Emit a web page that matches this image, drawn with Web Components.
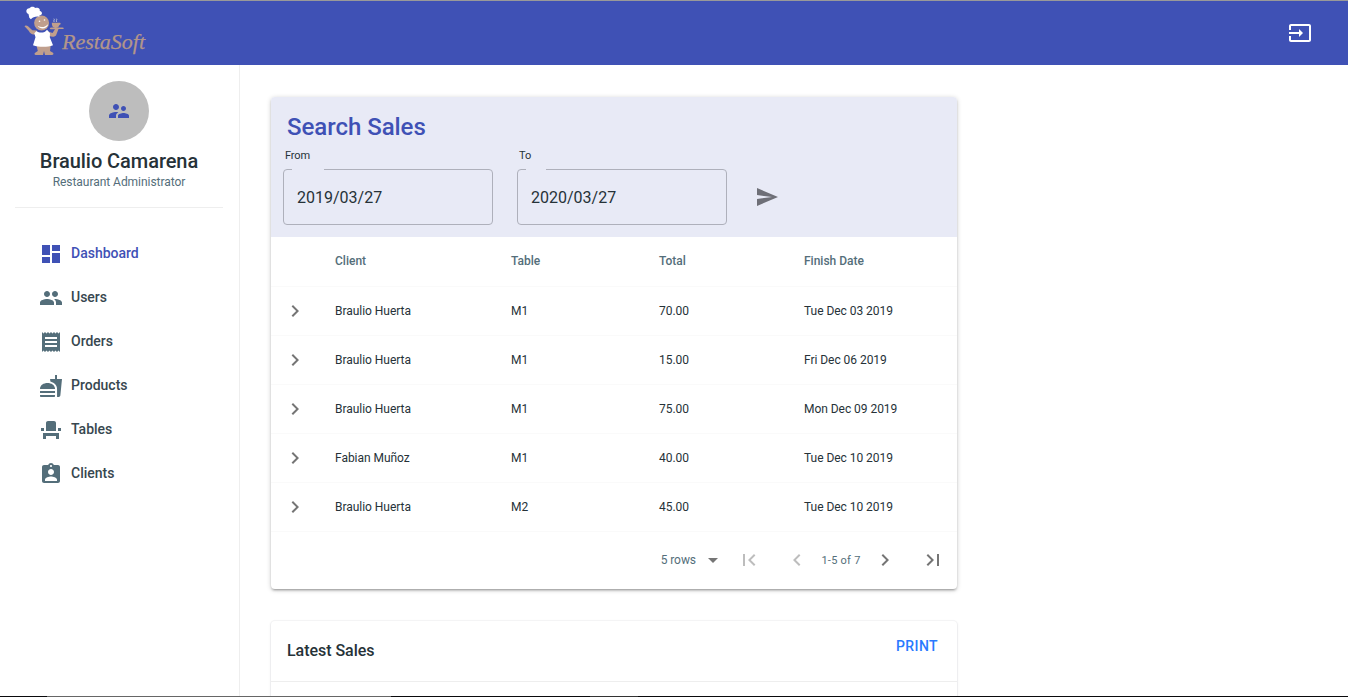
<!DOCTYPE html>
<html lang="en">
<head>
<meta charset="utf-8">
<title>RestaSoft</title>
<style>
html,body{margin:0;height:100%;overflow:hidden;background:#fff;font-family:Roboto,"Liberation Sans",sans-serif;color:#263238}
</style>
</head>
<body>
<rs-app></rs-app>
<script>
const ICONS={
dashboard:'M3 13h8V3H3v10zm0 8h8v-6H3v6zm10 0h8V11h-8v10zm0-18v6h8V3h-8z',
people:'M16 11c1.66 0 2.99-1.34 2.99-3S17.66 5 16 5c-1.66 0-3 1.34-3 3s1.34 3 3 3zm-8 0c1.66 0 2.99-1.34 2.99-3S9.66 5 8 5C6.34 5 5 6.34 5 8s1.34 3 3 3zm0 2c-2.33 0-7 1.17-7 3.5V19h14v-2.5c0-2.33-4.67-3.5-7-3.5zm8 0c-.29 0-.62.02-.97.05 1.16.84 1.97 1.97 1.97 3.45V19h6v-2.5c0-2.33-4.67-3.5-7-3.5z',
receipt:'M18 17H6v-2h12v2zm0-4H6v-2h12v2zm0-4H6V7h12v2zM3 22l1.5-1.5L6 22l1.5-1.5L9 22l1.5-1.5L12 22l1.5-1.5L15 22l1.5-1.5L18 22l1.5-1.5L21 22V2l-1.5 1.5L18 2l-1.5 1.5L15 2l-1.5 1.5L12 2l-1.5 1.5L9 2 7.5 3.5 6 2 4.5 3.5 3 2v20z',
fastfood:'M18.06 22.99h1.66c.84 0 1.53-.64 1.63-1.46L23 5.05h-5V1h-1.97v4.05h-4.97l.3 2.34c1.71.47 3.31 1.32 4.27 2.26 1.44 1.42 2.43 2.89 2.43 5.29v8.05zM1 21.99V21h15.03v.99c0 .55-.45 1-1.01 1H2.01c-.56 0-1.01-.45-1.01-1zm15.03-7c0-8-15.03-8-15.03 0h15.03zM1.02 17h15v2h-15z',
seat:'M4 18v3h3v-3h10v3h3v-6H4zm15-8h3v3h-3zM2 10h3v3H2zm15 3H7V5c0-1.1.9-2 2-2h6c1.1 0 2 .9 2 2v8z',
client:'M19 3h-4.18C14.4 1.84 13.3 1 12 1c-1.3 0-2.4.84-2.82 2H5c-1.1 0-2 .9-2 2v14c0 1.1.9 2 2 2h14c1.1 0 2-.9 2-2V5c0-1.1-.9-2-2-2zm-7 0c.55 0 1 .45 1 1s-.45 1-1 1-1-.45-1-1 .45-1 1-1zm0 4c1.66 0 3 1.34 3 3s-1.34 3-3 3-3-1.34-3-3 1.34-3 3-3zm6 12H6v-1.4c0-2 4-3.1 6-3.1s6 1.1 6 3.1V19z',
supervisor:'M16.5 12c1.38 0 2.49-1.12 2.49-2.5S17.88 7 16.5 7C15.12 7 14 8.12 14 9.5s1.12 2.5 2.5 2.5zM9 11c1.66 0 2.99-1.34 2.99-3S10.66 5 9 5C7.34 5 6 6.34 6 8s1.34 3 3 3zm7.5 3c-1.83 0-5.5.92-5.5 2.75V19h11v-2.25c0-1.83-3.67-2.75-5.5-2.75zM9 13c-2.33 0-7 1.17-7 3.5V19h7v-2.25c0-.85.33-2.34 2.37-3.47C10.5 13.1 9.66 13 9 13z',
input:'M21 3.01H3c-1.1 0-2 .9-2 2V9h2V4.99h18v14.03H3V15H1v4.01c0 1.1.9 1.98 2 1.98h18c1.1 0 2-.88 2-1.98v-14c0-1.11-.9-2-2-2zM11 16l4-4-4-4v3H1v2h10v3z',
send:'M2.01 21L23 12 2.01 3 2 10l15 2-15 2z',
right:'M10 6L8.59 7.41 13.17 12l-4.58 4.59L10 18l6-6z',
left:'M15.41 7.41L14 6l-6 6 6 6 1.41-1.41L10.83 12z',
first:'M18.41 16.59L13.82 12l4.59-4.59L17 6l-6 6 6 6zM6 6h2v12H6z',
last:'M5.59 7.41L10.18 12l-4.59 4.59L7 18l6-6-6-6zM16 6h2v12h-2z',
drop:'M7 10l5 5 5-5z'
};
const define=(name,html)=>customElements.define(name,class extends HTMLElement{
  constructor(){super();
    const t=document.createElement('template');
    t.innerHTML=typeof html==='function'?html(this):html;
    this.attachShadow({mode:'open'}).append(t.content.cloneNode(true));
  }
});
define('rs-icon',el=>`<style>:host{display:block;width:24px;height:24px;flex:none}svg{display:block;fill:currentColor}</style>
<svg width="24" height="24" viewBox="0 0 24 24"><path d="${ICONS[el.getAttribute('name')]}"/></svg>`);

define('rs-logo',`<style>:host{display:block;width:130px;height:56px}svg{display:block}
text{font:italic 22px "Liberation Serif",serif;fill:#b3968a;stroke:#b3968a;stroke-width:.25px}</style>
<svg width="130" height="56" viewBox="20 4 130 56">
<g fill="#c09f8d">
<circle cx="41.6" cy="23" r="7.5"/>
<path d="M24.500 26.200c.6-1.200 2.600-.9 3.800.4l4 3.600 4.600.2-.6 3.600c-3.400 1.400-5.600.4-7.600-3.200z"/>
<path d="M48 31.500l4.500 1.500 2.500-3.700h-4.500c-1.500-1-.5-1.800 1-1.800h11c2 .3 1.500 1.600-.5 1.600h-3.500l-2.500 6.400c-2.500 2.300-6 1.300-8-.7z"/>
<path d="M51.800 22.800h7.400c2-.3 1.900 1.900.2 2.100-.7 2-1.800 3-4 3-2.400 0-3.600-1.500-3.600-5.100z"/>
<path d="M36 43h15l-1 8 3 1.800c1 1.200.3 2.200-1 2.200h-7l-1-4-1 4h-7c-1.800 0-2-1.400-.5-2.400l2.300-1.600z"/>
</g>
<g fill="#fff">
<path d="M29.300 17.700l-.8-3.800c-3-.8-3-5.400.9-5.600 1.200-2.200 4.800-2 5.700-.2 2.600-1.200 5.600.8 4.600 3 3.500.6 2.700 4.600-.4 4.400l.1 1.200c-3.600-.5-6.500.2-8.500 2.600z"/>
<path d="M36.500 31c3 2.600 8.500 2 10.500-1.300l3 3.500-.2 4 3.200 8c-5.500 2-14 2-20 0l2.500-8-1.200-4z"/>
<path d="M37.700 25.800c3.500 2.300 8 1.400 10.500-1.800-.8 4.900-7.800 6.200-10.500 1.800z"/>
<circle cx="39.500" cy="21.300" r=".8"/><circle cx="44.500" cy="20" r=".8"/>
</g>
<path d="M54.500 22c-2-1.200.8-2-.6-3.300M57 22c-2-1.200.8-2-.6-3.300" fill="none" stroke="#ddd" stroke-width=".8"/>
<text x="62" y="48.800" textLength="83" lengthAdjust="spacing">RestaSoft</text>
</svg>`);

define('rs-topbar',`<style>:host{display:flex;box-sizing:border-box;height:65px;flex:none;align-items:center;justify-content:space-between;background:#3f51b5;border-top:1px solid #999;padding:0 36px 0 20px;color:#fff}
rs-logo{margin-top:-2px}</style><rs-logo></rs-logo><rs-icon name="input"></rs-icon>`);

define('rs-nav-item',el=>`<style>:host{display:flex;height:44px;align-items:center;padding-left:39px;font-size:14px;font-weight:500;color:#37474f}
:host([active]){color:#3f51b5}rs-icon{color:#546e7a;margin:1px 8px 0 0}:host([active]) rs-icon{color:#3f51b5}span{line-height:24px}</style>
<rs-icon name="${el.getAttribute('icon')}"></rs-icon><span><slot></slot></span>`);

define('rs-profile',`<style>:host{display:flex;flex-direction:column;align-items:center;margin:0 16px 0 15px;height:126px;border-bottom:1px solid #eee}
.av{width:60px;height:60px;border-radius:50%;background:#bdbdbd;color:#3f51b5;display:flex;align-items:center;justify-content:center}
.n{font-size:20px;font-weight:500;line-height:24px;margin-top:8px;letter-spacing:-.06px}.r{font-size:12px;line-height:18px;color:#546e7a;letter-spacing:-.04px}</style>
<div class="av"><rs-icon name="supervisor"></rs-icon></div><div class="n"><slot></slot></div><div class="r"><slot name="role"></slot></div>`);

define('rs-sidebar',`<style>:host{display:block;box-sizing:border-box;width:240px;flex:none;border-right:1px solid #eee;padding-top:16px}
nav{padding-top:23px}</style>
<rs-profile>Braulio Camarena<span slot="role">Restaurant Administrator</span></rs-profile>
<nav><rs-nav-item icon="dashboard" active>Dashboard</rs-nav-item><rs-nav-item icon="people">Users</rs-nav-item><rs-nav-item icon="receipt">Orders</rs-nav-item><rs-nav-item icon="fastfood">Products</rs-nav-item><rs-nav-item icon="seat">Tables</rs-nav-item><rs-nav-item icon="client">Clients</rs-nav-item></nav>`);

define('rs-date-field',el=>`<style>:host{display:block;width:210px}
label{display:block;font-size:11px;line-height:14px;padding-left:2px;margin-bottom:6px;letter-spacing:-.1px}
fieldset{box-sizing:border-box;height:56px;margin:0;min-width:0;border:1px solid #aeb0bb;border-radius:4px;padding:0 0 0 8px}
legend{padding:0;height:1px;width:${el.getAttribute('notch')}px}
div{font-size:16px;line-height:56px;height:54px;padding-left:5px}</style>
<label>${el.getAttribute('label')}</label><fieldset><legend></legend><div><slot></slot></div></fieldset>`);

define('rs-row',el=>{
  const c=el.getAttribute('cells').split('|'),h=el.hasAttribute('head');
  return `<style>:host{display:grid;box-sizing:border-box;grid-template-columns:64px 176px 148px 145px 1fr;height:49px;align-items:center;border-bottom:1px solid #fafafa;font-size:12px;letter-spacing:-.04px}
:host([head]){height:50px;padding-bottom:1px;font-weight:500;color:#546e7a;letter-spacing:0}rs-icon{margin-left:12px;color:#757575}span{line-height:18px}</style>
${h?'<i></i>':'<rs-icon name="right"></rs-icon>'}${c.map(x=>`<span>${x}</span>`).join('')}`;
});

define('rs-pager',`<style>:host{display:flex;box-sizing:border-box;height:57px;align-items:center;font-size:12px;color:#546e7a;padding:0 12px 1px 0;justify-content:flex-end}
rs-icon{color:#757575}.off{color:#bdbdbd}.rows{margin-right:5px;letter-spacing:-.06px}.count{width:64px;text-align:center;font-size:11px;letter-spacing:.25px;line-height:14px;padding-top:2px}</style>
<span class="rows">5 rows</span><rs-icon name="drop"></rs-icon><rs-icon class="off" name="first" style="margin-left:12px"></rs-icon><rs-icon class="off" name="left" style="margin-left:24px"></rs-icon><span class="count">1-5 of 7</span><rs-icon name="right"></rs-icon><rs-icon name="last" style="margin-left:24px"></rs-icon>`);

define('rs-search-card',`<style>:host{display:block;background:#fff;border-radius:4px;box-shadow:0 1px 5px rgba(0,0,0,.2),0 2px 2px rgba(0,0,0,.14),0 3px 1px -2px rgba(0,0,0,.12)}
header{box-sizing:border-box;height:140px;background:#e8eaf6;border-radius:4px 4px 0 0;padding:13px 12px 0}
h2{margin:0 0 4px 4px;font-size:24px;font-weight:500;line-height:34px;color:#3f51b5;letter-spacing:-.04px}
.f{display:flex;gap:24px}rs-date-field{padding-top:1px}rs-icon{color:#6e6f77;margin:37px 0 0 4px}</style>
<header><h2>Search Sales</h2><div class="f"><rs-date-field label="From" notch="32">2019/03/27</rs-date-field><rs-date-field label="To" notch="20">2020/03/27</rs-date-field><rs-icon name="send"></rs-icon></div></header>
<rs-row head cells="Client|Table|Total|Finish Date"></rs-row>
<rs-row cells="Braulio Huerta|M1|70.00|Tue Dec 03 2019"></rs-row>
<rs-row cells="Braulio Huerta|M1|15.00|Fri Dec 06 2019"></rs-row>
<rs-row cells="Braulio Huerta|M1|75.00|Mon Dec 09 2019"></rs-row>
<rs-row cells="Fabian Muñoz|M1|40.00|Tue Dec 10 2019"></rs-row>
<rs-row cells="Braulio Huerta|M2|45.00|Tue Dec 10 2019"></rs-row>
<rs-pager></rs-pager>`);

define('rs-latest-card',`<style>:host{display:block;height:200px;background:#fff;border-radius:4px;box-shadow:0 0 0 1px rgba(63,63,68,.04),0 1px 3px rgba(63,63,68,.13)}
header{box-sizing:border-box;height:61px;border-bottom:1px solid #eee;display:flex;justify-content:space-between;padding:0 19px 0 16px}
b{font-weight:500;font-size:16px;line-height:60px;letter-spacing:-.04px}a{font-size:14px;font-weight:500;color:#2979ff;letter-spacing:.4px;line-height:51px}</style>
<header><b>Latest Sales</b><a>PRINT</a></header>`);

define('rs-taskbar-edge',`<style>:host{display:flex;height:1px;flex:none;background:#0a0a0c}i{flex:none}.a{width:47px}.b{width:344px;background:#666}.c{width:199px}.d{width:48px;background:#333}</style><i class="a"></i><i class="b"></i><i class="c"></i><i class="d"></i>`);

define('rs-app',`<style>:host{display:flex;flex-direction:column;height:697px;overflow:hidden}
.b{display:flex;flex:1;min-height:0;overflow:hidden}main{display:flex;flex-direction:column;gap:32px;width:686px;padding:32px 0 0 31px}main>*{flex:none}</style>
<rs-topbar></rs-topbar><div class="b"><rs-sidebar></rs-sidebar><main><rs-search-card></rs-search-card><rs-latest-card></rs-latest-card></main></div><rs-taskbar-edge></rs-taskbar-edge>`);
</script>
</body>
</html>
